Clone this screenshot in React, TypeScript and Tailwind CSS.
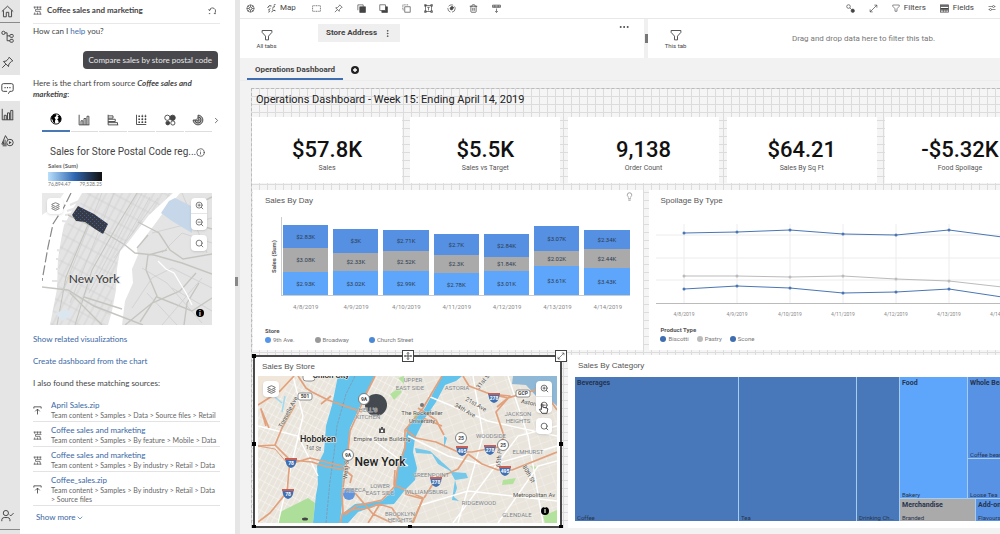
import type { ReactNode } from 'react';
import {
  ChevronDown,
  ChevronRight,
  Info,
  Layers,
  Lightbulb,
  MoreHorizontal,
  MoreVertical,
  Search,
  Trash2,
  ZoomIn,
  ZoomOut,
} from 'lucide-react';

interface IconProps {
  className?: string;
}

function Svg({ className = 'w-[10px] h-[10px]', children }: IconProps & { children: ReactNode }) {
  return (
    <svg viewBox="0 0 16 16" className={className} fill="none" stroke="currentColor" strokeWidth="1.2" aria-hidden="true">
      {children}
    </svg>
  );
}

const HomeIcon = (p: IconProps) => (
  <Svg {...p}>
    <path d="M1 8L8 1.5L15 8M3 6.5V14.5H6.5V9H9.5V14.5H13V6.5" />
  </Svg>
);

const TreeIcon = (p: IconProps) => (
  <Svg {...p}>
    <circle cx="3" cy="3.5" r="2" />
    <rect x="11" y="5.5" width="4" height="3.5" rx="1" />
    <rect x="11" y="11.5" width="4" height="3.5" rx="1" />
    <path d="M5 3.5H7.5V13.2H11M7.5 7.2H11" />
  </Svg>
);

const PinIcon = (p: IconProps) => (
  <Svg {...p}>
    <path d="M10 1.5L14.5 6L13 6.5L9.8 9.7L9.2 13L3 6.8L6.3 6.2L9.5 3ZM6 10L1.5 14.5" />
  </Svg>
);

const ChatIcon = (p: IconProps) => (
  <Svg {...p}>
    <path d="M9 14.5L10.8 11.5H13A2 2 0 0 0 15 9.5V4A2 2 0 0 0 13 2H3A2 2 0 0 0 1 4V9.5A2 2 0 0 0 3 11.5H7.5" />
    <path d="M4.3 6.8H5.7M7.3 6.8H8.7M10.3 6.8H11.7" strokeWidth="1.6" />
  </Svg>
);

const ColumnsIcon = (p: IconProps) => (
  <Svg {...p}>
    <path d="M1.5 1V14.5H15M4 14.5V9H6.500V14.5M8 14.5V6H10.5V14.5M12 14.5V3H14.5V14.5" />
  </Svg>
);

const ShapesIcon = (p: IconProps) => (
  <Svg {...p}>
    <path d="M7 12.5H1L5.5 2L8.5 7M3 12.5V9M5 12.5V7M2 14.5H7" />
    <circle cx="11" cy="10.5" r="4" />
    <path d="M9.8 8.5V12.5L13 10.5Z" fill="currentColor" stroke="none" />
  </Svg>
);

const UserIcon = (p: IconProps) => (
  <Svg {...p}>
    <circle cx="6" cy="5" r="3.2" />
    <path d="M1 15V13A3 3 0 0 1 4 10.5H8A3 3 0 0 1 11 13V15M10.5 7L12 8.5L15.5 5" />
  </Svg>
);

const SourceIcon = (p: IconProps) => (
  <Svg {...p}>
    <path d="M1 2H15M3 1V5M8 1V5M13 1V5M15 6H4.500V9.500H12.500V12M1 14.500H15M3 11.500V15M8 11.500V15M13 11.500V15" />
  </Svg>
);

const UploadIcon = (p: IconProps) => (
  <Svg {...p}>
    <path d="M1.5 4.500V1.500H14.5V4.500M8 15V5.5M4 9.5L8 5.5L12 9.5" strokeWidth="1.5" />
  </Svg>
);

const ResetIcon = (p: IconProps) => (
  <Svg {...p}>
    <path d="M4 13.5H1.500M2.500 8L0.500 6M2.500 8L5 6M2.500 8A5.500 5.500 0 1 1 11 13.5H14" strokeWidth="1.4" />
  </Svg>
);

const FunnelIcon = (p: IconProps) => (
  <Svg {...p}>
    <path d="M1.5 2H14.5V4.5L10 9.5V14.5H6V9.5L1.5 4.5Z" />
  </Svg>
);

const GlobeIcon = (p: IconProps) => (
  <Svg {...p}>
    <circle cx="8" cy="8" r="6.8" />
    <path
      d="M2 5L5 1.8L8 1.5L8.5 4L6 6L7.5 8.5L6.5 10.5L7 14L4 12L3.5 9L1.5 8ZM10 4L13 3L15 7L14 11L11.5 13L11 10L9.5 8.5L11.5 6.5Z"
      fill="currentColor"
      stroke="none"
    />
  </Svg>
);

const BarsIcon = (p: IconProps) => (
  <Svg {...p}>
    <path d="M1.5 1V14.5H15M1.5 2.5H8V5.5H1.5M1.5 7H11V10H1.5M1.5 11.5H14V14.5" />
  </Svg>
);

const DotGridIcon = (p: IconProps) => (
  <Svg {...p}>
    <path d="M2 1V14H15" />
    <path d="M4.500 3H15M4.500 7H15M4.500 11H15" strokeWidth="2.200" strokeDasharray="2.200 2" />
    <path d="M9.800 1V13M14 1V13" strokeDasharray="1 1" />
  </Svg>
);

const BubblesIcon = (p: IconProps) => (
  <Svg {...p}>
    <circle cx="4.5" cy="5" r="3.5" />
    <circle cx="11.5" cy="5" r="3.5" fill="currentColor" />
    <circle cx="11.8" cy="12" r="2.8" />
    <circle cx="5" cy="12" r="2.5" fill="currentColor" />
  </Svg>
);

const RadialIcon = (p: IconProps) => (
  <Svg {...p}>
    <path d="M8 1.500A6.500 6.500 0 1 1 1.500 8H6.500A1.500 1.500 0 1 0 8 6.500ZM8 4A4 4 0 1 1 4 8" fill="#bbb" />
  </Svg>
);

const WheelIcon = (p: IconProps) => (
  <Svg {...p}>
    <circle cx="8" cy="8" r="6.5" />
    <circle cx="8" cy="8" r="2.5" />
    <path d="M8 1.5V5.5M8 10.5V14.5M1.5 8H5.5M10.5 8H14.5M3.5 3.5L6 6M10 10L12.5 12.5M12.5 3.5L10 6M6 10L3.5 12.5" />
  </Svg>
);

const MapToolIcon = (p: IconProps) => (
  <Svg {...p}>
    <path d="M1 7L4 3L8 3.5M12 2L15 1M10 6L14 4.5M2 11L6 8M3 15L5 11.5M8 14L12 11L15 12M9 9.5L11 8" strokeWidth="1.7" />
  </Svg>
);

const RectIcon = (p: IconProps) => (
  <Svg {...p}>
    <rect x="1" y="3" width="14" height="10" strokeDasharray="2 1" />
  </Svg>
);

const FrontIcon = (p: IconProps) => (
  <Svg {...p}>
    <path d="M1.5 11V1.5H11V5" />
    <rect x="5" y="5" width="10" height="10" fill="currentColor" />
  </Svg>
);

const BackIcon = (p: IconProps) => (
  <Svg {...p}>
    <path d="M12 5H15V15H5V12H12Z" fill="currentColor" />
    <rect x="1.5" y="1.5" width="10" height="10" />
  </Svg>
);

const DuplicateIcon = (p: IconProps) => (
  <Svg {...p}>
    <path d="M3 10.500H1.500V1.500H10.500V3" strokeDasharray="2 1" />
    <rect x="5" y="5" width="9.500" height="9.500" />
  </Svg>
);

const TextBoxIcon = (p: IconProps) => (
  <Svg {...p}>
    <rect x="2.5" y="2.5" width="11" height="11" />
    <path d="M1 1H4V4H1ZM12 1H15V4H12ZM1 12H4V15H1ZM12 12H15V15H12ZM5.5 5.8H10.5M8 5.8V11.5" />
  </Svg>
);

const SpinIcon = (p: IconProps) => (
  <Svg {...p}>
    <circle cx="8" cy="8" r="6.5" strokeDasharray="9 3" />
    <circle cx="8" cy="8" r="2.5" fill="currentColor" />
    <path d="M8 4L12 7" strokeWidth="2" />
  </Svg>
);

const AlignIcon = (p: IconProps) => (
  <Svg {...p}>
    <path d="M1 2H15V6H1ZM1 4H15M5 2V6M11 2V6M8 8V15M5.5 12.5L8 15L10.5 12.5" />
  </Svg>
);

const LinkDotsIcon = (p: IconProps) => (
  <Svg {...p}>
    <circle cx="4.5" cy="4.5" r="3.2" />
    <circle cx="12" cy="12" r="3" fill="currentColor" />
    <path d="M7 7L10 10" />
  </Svg>
);

const ExpandIcon = (p: IconProps) => (
  <Svg {...p}>
    <path d="M2 14L14 2M9.5 2H14V6.5M2 9.5V14H6.5" />
  </Svg>
);

const FieldsIcon = (p: IconProps) => (
  <Svg {...p}>
    <rect x="1" y="1.5" width="14" height="13" />
    <path d="M1 3.500H15M1 8.500H15" strokeWidth="3" />
    <path d="M1 12H15M6 10V14M10.5 10V14" />
  </Svg>
);

const SlidersIcon = (p: IconProps) => (
  <Svg {...p}>
    <path d="M1 5H9M13 5H15M1 11H3M7 11H15" />
    <circle cx="11" cy="5" r="2" />
    <circle cx="5" cy="11" r="2" />
  </Svg>
);

const MoveIcon = (p: IconProps) => (
  <Svg {...p}>
    <path d="M8 1V15M1 8H15M6 3L8 1L10 3M6 13L8 15L10 13M3 6L1 8L3 10M13 6L15 8L13 10" strokeWidth="1.8" />
  </Svg>
);

const railItems = [
  { label: 'Navigate', icon: TreeIcon },
  { label: 'Pinned', icon: PinIcon },
  { label: 'Assistant', icon: ChatIcon, active: true },
  { label: 'Visualizations', icon: ColumnsIcon },
  { label: 'Widgets', icon: ShapesIcon },
];

function Rail() {
  return (
    <nav className="w-5 shrink-0 bg-[#e5e5e5] text-[#444] flex flex-col">
      <button aria-label="Home" className="h-[23px] border-b border-[#8a8a8a] flex items-center pl-px">
        <HomeIcon className="w-[13px] h-[13px]" />
      </button>
      {railItems.map(({ label, icon: Icon, active }) => (
        <button
          key={label}
          aria-label={label}
          className={`h-[26px] flex items-center pl-px ${active ? 'bg-white' : ''}`}
        >
          <Icon className="w-[13px] h-[13px]" />
        </button>
      ))}
      <button aria-label="Account" className="mt-auto mb-1 h-7 border-b border-[#8a8a8a] flex items-center pl-px">
        <UserIcon className="w-[13px] h-[13px]" />
      </button>
    </nav>
  );
}

const chartTabs = [
  { label: 'Map', icon: GlobeIcon },
  { label: 'Column', icon: ColumnsIcon },
  { label: 'Bar', icon: BarsIcon },
  { label: 'Matrix', icon: DotGridIcon },
  { label: 'Bubble', icon: BubblesIcon },
  { label: 'Radial', icon: RadialIcon },
];

const sources = [
  { name: 'April Sales.zip', path: 'Team content > Samples > Data > Source files > Retail', icon: UploadIcon },
  { name: 'Coffee sales and marketing', path: 'Team content > Samples > By feature > Mobile > Data', icon: SourceIcon },
  { name: 'Coffee sales and marketing', path: 'Team content > Samples > By industry > Retail > Data', icon: SourceIcon },
  { name: 'Coffee_sales.zip', path: 'Team content > Samples > By industry > Retail > Data > Source files', icon: UploadIcon },
];

function MapControls() {
  return (
    <>
      <button aria-label="Layers" className="absolute left-[5px] top-[5px] w-4 h-4 bg-white rounded-sm shadow flex items-center justify-center">
        <Layers className="w-[9px] h-[9px]" />
      </button>
      <div className="absolute right-[5px] top-[5px] flex flex-col gap-[5px]">
        <div className="bg-white rounded-sm shadow flex flex-col">
          <button aria-label="Zoom in" className="w-4 h-4 flex items-center justify-center border-b border-[#e5e5e5]">
            <ZoomIn className="w-[9px] h-[9px]" />
          </button>
          <button aria-label="Zoom out" className="w-4 h-4 flex items-center justify-center">
            <ZoomOut className="w-[9px] h-[9px]" />
          </button>
        </div>
        <button aria-label="Search map" className="w-4 h-4 bg-white rounded-sm shadow flex items-center justify-center">
          <Search className="w-[9px] h-[9px]" />
        </button>
      </div>
      <button aria-label="Map information" className="absolute right-2 bottom-2 w-2 h-2 rounded-full bg-black text-white text-[7px] leading-[8px] font-bold text-center">
        i
      </button>
    </>
  );
}

function PostalMap() {
  return (
    <div className="relative ml-[9px] mr-2 mt-[5px] h-[132px] text-[#555]">
      <svg viewBox="0 0 170 132" preserveAspectRatio="xMidYMid slice" className="w-full h-full" role="img" aria-label="Map of New York">
        <defs>
          <pattern id="avenues" width="7" height="12" patternUnits="userSpaceOnUse" patternTransform="rotate(28)">
            <path d="M1 0V12M0 3H7" stroke="#cfcfcf" strokeWidth="0.8" fill="none" />
          </pattern>
          <pattern id="shade" width="4" height="4" patternUnits="userSpaceOnUse">
            <rect width="4" height="4" fill="#3a3b42" />
            <rect width="1" height="1" fill="#2f5fb0" />
            <rect x="2" y="2" width="1" height="1" fill="#2f5fb0" />
          </pattern>
        </defs>
        <rect width="170" height="132" fill="#e4e4e4" />
        <path d="M45 0H130L108 22L82 50L76 58L72 100L67 125L65 132H0V50L20 40Z" fill="url(#avenues)" />
        <path d="M0 0H40L31 16L22 32L19 47L16 66L15 96L8 132H0Z" fill="#fff" />
        <path d="M0 0H22L12 14L0 22Z" fill="#e9e9e9" />
        <path d="M131 0H138L120 22L103 44L95 56L96 62L90 76L91 90L83 108L80 132H66L70 118L74 97L75 76L78 58L84 52L107 22Z" fill="#fff" />
        <path d="M118 24L127 12L130 14L109 37Z" fill="#e4e4e4" />
        <path d="M29 0L22 14L11 31L6 54L0 88" stroke="#888" strokeWidth="1.2" strokeDasharray="10 3" fill="none" />
        <path d="M28 12L37 8M25 18L34 15M23 22L31 21M20 28L28 29M15 57L19 58M14 66L18 66M14 76L17 76M10 88L16 88" stroke="#e4e4e4" strokeWidth="2" />
        <g fill="none" stroke="#c5c5c0" strokeWidth="1.4">
          <path d="M0 94L26 97L52 113L101 132M28 100L60 132M42 104L80 116" />
          <path d="M26 22L60 38L83 52L93 60L112 62L140 70L170 81" />
          <path d="M96 29L117 40L128 57L141 66L170 61M106 42L95 55M125 57L106 62L104 77L115 103L98 129M154 80L138 98L110 110L83 132" />
          <path d="M131 19L152 13L170 4M129 14L147 29L170 36M142 132L145 110L157 90M115 104L150 118L170 105" />
          <path d="M33 132L50 77L75 33L95 0M15 132L24 84L50 22" strokeWidth="1.1" />
        </g>
        <g fill="none" stroke="#cbcbcb" strokeWidth="0.7">
          <path d="M90 115L110 85L130 75L170 95M100 75L125 90L160 130M120 60L140 40L170 50M140 0L165 60M110 40L170 25M130 95L170 118M105 100L135 132M120 132L160 85" />
          <path d="M100 0L47 100M108 4L60 90M116 5L72 65M60 0L20 100M72 0L28 110" />
        </g>
        <path d="M116 68L124 76L132 80L144 100L150 112" stroke="#fff" strokeWidth="1.3" fill="none" />
        <path d="M119 20L127 8L133 5L149 13L150 40L140 34L130 28Z" fill="#c5d7e9" />
        <path d="M13 120L25 116L31 122L20 128Z" fill="#dce6ee" />
        <path d="M36 13L46 18L52 21L66 31L61 41L53 36L43 29L34 28L30 22Z" fill="url(#shade)" />
        <text x="52" y="90" textAnchor="middle" fontSize="12" fontWeight="500" fill="#444" stroke="#e9e9e9" strokeWidth="1.5" paintOrder="stroke">
          New York
        </text>
      </svg>
      <MapControls />
    </div>
  );
}

function AssistantPanel() {
  return (
    <aside className="w-[215px] shrink-0 bg-white pl-[13px] pr-[15px] font-[Lato,'Liberation_Sans',sans-serif] text-[8px] leading-[11px] text-[#444]">
      <header className="h-6 border-b border-[#e8e8e8] flex items-center gap-[5px] pb-[3px]">
        <SourceIcon className="w-[9px] h-[9px]" />
        <h1 className="font-bold flex-1">Coffee sales and marketing</h1>
        <button aria-label="Start over" className="mr-[3px]">
          <ResetIcon className="w-[9px] h-[9px]" />
        </button>
      </header>
      <p className="mt-[2px]">
        How can I <a href="#help" className="text-[#3f6fb0]">help</a> you?
      </p>
      <div className="mt-[14px] flex justify-end pr-[2px]">
        <p className="h-[18px] px-[6px] rounded-[4px] bg-[#47474c] text-[#e8e8e8] flex items-center">
          Compare sales by store postal code
        </p>
      </div>
      <p className="mt-[9px]">
        Here is the chart from source <b><i>Coffee sales and marketing</i></b>:
      </p>

      <div className="mt-2 ml-[9px] flex items-center">
        <div className="flex-1 flex gap-px">
          {chartTabs.map(({ label, icon: Icon }, i) => (
            <button
              key={label}
              aria-label={label}
              className={`flex-1 h-6 flex items-center justify-center ${
                i === 0 ? 'border-[#4a78b5] border-b-2 text-black' : 'border-b border-[#ddd]'
              }`}
            >
              <Icon className="w-3 h-3" />
            </button>
          ))}
        </div>
        <button aria-label="More chart types" className="w-2">
          <ChevronRight className="w-[9px] h-[9px]" />
        </button>
      </div>

      <h2 className="mt-[13px] ml-[17px] font-[Roboto,sans-serif] text-[10px] leading-[14px] flex items-center whitespace-nowrap">
        Sales for Store Postal Code reg... <Info className="w-[9px] h-[9px]" />
      </h2>
      <div className="ml-[15px] mt-[3px] text-[6px] leading-[8px]">
        <p className="font-bold text-[#666]">Sales (Sum)</p>
        <div className="mt-[2px] w-[54px] h-[9px] bg-linear-to-r from-[#b9e0fb] via-[#2f66b0] to-[#111]" />
        <div className="w-[54px] h-[7px] flex justify-between text-[5px] leading-[7px] text-[#777]">
          <span>76,894.47</span>
          <span>79,528.25</span>
        </div>
      </div>
      <PostalMap />

      <a href="#related" className="block mt-[9px] text-[#3a67a5]">Show related visualizations</a>
      <a href="#create" className="block mt-[11px] text-[#3a67a5]">Create dashboard from the chart</a>
      <p className="mt-[11px] mb-2">I also found these matching sources:</p>
      <ul>
        {sources.map(({ name, path, icon: Icon }, i) => (
          <li key={i} className="pt-[3px] pb-px border-b border-[#e3e3e3] flex items-center">
            <Icon className="w-[9px] h-[9px] shrink-0" />
            <div className="ml-[9px]">
              <a href="#source" className="block text-[#3a67a5]">{name}</a>
              <p className="text-[7px] leading-[9px] text-[#666]">{path}</p>
            </div>
          </li>
        ))}
      </ul>
      <button className="mt-[6px] ml-[3px] text-[#3a67a5] flex items-center gap-px">
        Show more <ChevronDown className="w-2 h-2" />
      </button>
    </aside>
  );
}

const editTools = [
  { label: 'Select', icon: RectIcon },
  { label: 'Pin', icon: PinIcon },
  { label: 'Bring to front', icon: FrontIcon },
  { label: 'Send to back', icon: BackIcon },
  { label: 'Duplicate', icon: DuplicateIcon },
  { label: 'Text', icon: TextBoxIcon },
  { label: 'Interactions', icon: SpinIcon },
  { label: 'Delete', icon: Trash2 },
  { label: 'Align', icon: AlignIcon },
];

function Toolbar() {
  return (
    <div className="h-[19px] pb-[2px] bg-white border-b border-[#e8e8e8] text-[8px] text-[#444] flex items-center pl-[6px] pr-1">
      <button aria-label="Settings"><WheelIcon className="w-[9px] h-[9px]" /></button>
      <button className="ml-3 flex items-center gap-1"><MapToolIcon className="w-[9px] h-[9px]" /> Map</button>
      <div className="ml-4 w-[189px] flex justify-between">
        {editTools.map(({ label, icon: Icon }) => (
          <button key={label} aria-label={label}><Icon className="w-[9px] h-[9px]" /></button>
        ))}
      </div>
      <div className="ml-auto flex items-center gap-[14px]">
        <button aria-label="Relationships"><LinkDotsIcon className="w-[9px] h-[9px]" /></button>
        <button aria-label="Full screen"><ExpandIcon className="w-[9px] h-[9px]" /></button>
        <button className="flex items-center gap-1"><FunnelIcon className="w-2 h-2" /> Filters</button>
        <button className="flex items-center gap-1"><FieldsIcon className="w-[9px] h-[9px]" /> Fields</button>
        <button aria-label="Properties"><SlidersIcon className="w-2 h-2" /></button>
      </div>
    </div>
  );
}

function FilterBar() {
  return (
    <div className="grid grid-cols-[404fr_4px_352fr] h-[39px] text-[#444]">
      <div className="bg-white flex">
        <div className="w-[53px] pt-[10px] flex flex-col items-center text-[6px] leading-[9px]">
          <FunnelIcon className="w-3 h-3" />
          All tabs
        </div>
        <div className="ml-[25px] mt-[5px] h-[18px] w-[82px] bg-[#efefef] flex items-center justify-between pl-2 pr-2 text-[8px] font-bold">
          Store Address
          <button aria-label="Filter options"><MoreVertical className="w-[9px] h-[9px]" /></button>
        </div>
        <button aria-label="More filters" className="ml-auto mr-[14px] mt-[2px] self-start">
          <MoreHorizontal className="w-3 h-3" />
        </button>
      </div>
      <div className="bg-[#f0f0f0] flex items-center justify-center">
        <div className="w-[3px] h-[9px] bg-[#777]" />
      </div>
      <div className="bg-white flex">
        <div className="w-[55px] pt-[10px] flex flex-col items-center text-[6px] leading-[9px]">
          <FunnelIcon className="w-3 h-3" />
          This tab
        </div>
        <p className="flex-1 pl-6 flex items-center justify-center text-[8px] text-[#777]">
          Drag and drop data here to filter this tab.
        </p>
      </div>
    </div>
  );
}

const kpis = [
  { value: '$57.8K', label: 'Sales' },
  { value: '$5.5K', label: 'Sales vs Target' },
  { value: '9,138', label: 'Order Count' },
  { value: '$64.21', label: 'Sales By Sq Ft' },
  { value: '-$5.32K', label: 'Food Spoilage' },
];

function KpiRow() {
  return (
    <div className="flex gap-2">
      {kpis.map((kpi) => (
        <div key={kpi.label} className="flex-1 h-[66px] bg-white flex flex-col items-center pt-[20px]">
          <strong className="text-[22px] leading-[26px] font-medium text-[#111]">{kpi.value}</strong>
          <span className="text-[7px] leading-[11px] text-[#555]">{kpi.label}</span>
        </div>
      ))}
    </div>
  );
}

// thousands of dollars, one column per day
const salesByDay = [
  { day: '4/8/2019', church: 2.83, broadway: 3.08, ninth: 2.93 },
  { day: '4/9/2019', church: 3, broadway: 2.33, ninth: 3.02 },
  { day: '4/10/2019', church: 2.71, broadway: 2.52, ninth: 2.99 },
  { day: '4/11/2019', church: 2.7, broadway: 2.3, ninth: 2.78 },
  { day: '4/12/2019', church: 2.84, broadway: 1.84, ninth: 3.01 },
  { day: '4/13/2019', church: 3.07, broadway: 2.02, ninth: 3.61 },
  { day: '4/14/2019', church: 2.34, broadway: 2.44, ninth: 3.43 },
];

const PX_PER_K = 7.9;

function Segment({ value, className }: { value: number; className: string }) {
  return (
    <div
      className={`flex items-center justify-center text-[6px] text-[#2d3b50] ${className}`}
      style={{ height: value * PX_PER_K }}
    >
      ${value}K
    </div>
  );
}

function PanelTitle({ children }: { children: ReactNode }) {
  return <h3 className="font-['Liberation_Sans',sans-serif] text-[8px] leading-[10px] text-[#555]">{children}</h3>;
}

function Legend({ title, items, gap }: { title: string; items: { name: string; dot: string }[]; gap: string }) {
  return (
    <div className="text-[6px] leading-[9px] text-[#777]">
      <p className="font-bold text-[#555]">{title}</p>
      <ul className={`flex ${gap}`}>
        {items.map((item) => (
          <li key={item.name} className="flex items-center gap-[2px]">
            <span className={`w-[6px] h-[6px] rounded-full ${item.dot}`} />
            {item.name}
          </li>
        ))}
      </ul>
    </div>
  );
}

function SalesByDay() {
  return (
    <section className="h-[160px] bg-white pt-[6px] pl-3 pr-[13px]">
      <div className="flex justify-between items-start">
        <PanelTitle>Sales By Day</PanelTitle>
        <button aria-label="Insights" className="text-[#888] -mt-1 -mr-1"><Lightbulb className="w-[9px] h-[9px]" /></button>
      </div>
      <div className="mt-[11px] flex">
        <div className="w-4 flex items-center justify-center">
          <span className="-rotate-90 whitespace-nowrap text-[6px] font-bold text-[#555]">Sales (Sum)</span>
        </div>
        <div className="flex-1 h-[79px] border-l border-b border-[#ccc] flex items-end gap-[5px] px-px">
          {salesByDay.map((d) => (
            <div key={d.day} className="flex-1">
              <Segment value={d.church} className="bg-[#5590e2]" />
              <Segment value={d.broadway} className="bg-[#aaa]" />
              <Segment value={d.ninth} className="bg-[#5ea6fb]" />
            </div>
          ))}
        </div>
      </div>
      <div className="mt-[6px] ml-[18px] flex gap-[5px] text-[6px] leading-[9px] text-[#888]">
        {salesByDay.map((d) => (
          <span key={d.day} className="flex-1 text-center">{d.day}</span>
        ))}
      </div>
      <div className="mt-[15px]">
        <Legend
          title="Store"
          gap="gap-5"
          items={[
            { name: '9th Ave.', dot: 'bg-[#5596ea]' },
            { name: 'Broadway', dot: 'bg-[#999]' },
            { name: 'Church Street', dot: 'bg-[#4a88d8]' },
          ]}
        />
      </div>
    </section>
  );
}

const spoilageDays = ['4/8/2019', '4/9/2019', '4/10/2019', '4/11/2019', '4/12/2019', '4/13/2019', '4/14/2019'];

const spoilageLines = [
  { name: 'Biscotti', color: '#4a76b4', points: [22, 21, 19, 23, 24, 19, 26] },
  { name: 'Pastry', color: '#bbbbbb', points: [65, 65, 66, 65, 68, 70, 76] },
  { name: 'Scone', color: '#4a76b4', points: [78, 75, 77, 82, 81, 78, 86] },
];

const dayX = (i: number) => 28 + i * 53;

function SpoilageByType() {
  return (
    <section className="h-[160px] bg-white pt-[6px] pl-[11px] overflow-hidden">
      <PanelTitle>Spoilage By Type</PanelTitle>
      <svg viewBox="0 0 376 112" className="-ml-1 mt-[5px] w-[376px] h-[112px]" role="img" aria-label="Spoilage by product type">
        <path d="M0 24H376M0 47H376M0 69H376" stroke="#ececec" />
        <path d="M0 92.500H376" stroke="#bbb" />
        {spoilageDays.map((day, i) => (
          <g key={day}>
            <path d={`M${dayX(i)} 13V92`} stroke="#ececec" />
            <text x={dayX(i)} y="105" textAnchor="middle" fontSize="5" fill="#888">{day}</text>
          </g>
        ))}
        {spoilageLines.map((line) => (
          <g key={line.name}>
            <polyline
              points={line.points.map((y, i) => `${dayX(i)},${y}`).join(' ')}
              fill="none"
              stroke={line.color}
            />
            {line.points.map((y, i) => (
              <circle key={i} cx={dayX(i)} cy={y} r="1.500" fill={line.color} />
            ))}
          </g>
        ))}
      </svg>
      <div className="mt-[2px]">
        <Legend
          title="Product Type"
          gap="gap-2"
          items={[
            { name: 'Biscotti', dot: 'bg-[#3e6db0]' },
            { name: 'Pastry', dot: 'bg-[#bbb]' },
            { name: 'Scone', dot: 'bg-[#3e6db0]' },
          ]}
        />
      </div>
    </section>
  );
}

const shields = [
  { x: 33, y: 87, n: '78' },
  { x: 30, y: 118, n: '78' },
  { x: 236, y: 22, n: '278' },
  { x: 204, y: 75, n: '495' },
  { x: 232, y: 74, n: '278' },
  { x: 247, y: 95, n: '495' },
  { x: 178, y: 106, n: '278' },
];

const roundSigns = [
  { x: 106, y: 23, n: '9A' },
  { x: 90, y: 79, n: '9A' },
  { x: 203, y: 62, n: '25' },
  { x: 245, y: 69, n: '25' },
];

const districts = [
  { x: 155, y: 6, name: 'UPPER' },
  { x: 152, y: 14, name: 'EAST SIDE' },
  { x: 199, y: 14, name: 'ASTORIA' },
  { x: 110, y: 36, name: "HELL'S" },
  { x: 110, y: 43, name: 'KITCHEN' },
  { x: 260, y: 40, name: 'JACKSON' },
  { x: 260, y: 47, name: 'HEIGHTS' },
  { x: 233, y: 62, name: 'WOODSIDE' },
  { x: 270, y: 78, name: 'ELMHURST' },
  { x: 173, y: 101, name: 'GREENPOINT' },
  { x: 168, y: 118, name: 'WILLIAMSBURG' },
  { x: 221, y: 129, name: 'RIDGEWOOD' },
  { x: 259, y: 141, name: 'GLENDALE' },
  { x: 96, y: 116, name: 'TRIBECA' },
  { x: 122, y: 112, name: 'LOWER' },
  { x: 122, y: 119, name: 'EAST SIDE' },
  { x: 142, y: 140, name: 'BROOKLYN' },
  { x: 142, y: 146, name: 'HEIGHTS' },
];

function StoreMap() {
  return (
    <svg viewBox="0 0 299 147" preserveAspectRatio="xMidYMid slice" className="w-full h-full" role="img" aria-label="Sales by store map">
      <defs>
        <pattern id="blocks" width="5" height="9" patternUnits="userSpaceOnUse" patternTransform="rotate(28)">
          <path d="M0 0V9M0 0H5" stroke="#fbfaf8" strokeWidth="1" fill="none" />
        </pattern>
        <pattern id="blocksQueens" width="11" height="8" patternUnits="userSpaceOnUse" patternTransform="rotate(-20)">
          <path d="M0 0V8M0 0H11" stroke="#f7f4ef" strokeWidth="0.9" fill="none" />
        </pattern>
      </defs>
      <rect width="299" height="147" fill="#e9e5dc" />
      <rect width="150" height="147" fill="url(#blocks)" />
      <rect x="150" width="149" height="147" fill="url(#blocksQueens)" />
      <path d="M19 147L22 136L50 122L57 127L55 147Z" fill="#addf9a" />
      <path d="M0 0H36L22 22L0 28Z" fill="#f1e6da" />
      <path d="M132 18L141 12L144 16L136 24ZM140 2L146 0L146 8ZM155 40L163 34L160 48ZM245 104L258 102L255 108L244 109ZM285 140L299 134V147H287ZM272 90L279 91L277 95Z" fill="#b3e29c" />
      <path d="M80 0H117L108 18L100 35L92 52L89 82L85 98L84 128L82 147H55L58 119L60 108L59 90L66 76L68 50L74 29Z" fill="#62c3ec" />
      <path d="M184 0H204L198 5L187 9L178 26L167 42L157 62L155 76L159 92L157 104L147 114L136 128L120 129L100 136L90 147H82L84 138L97 128L124 125L136 113L139 92L147 69L149 52L167 32Z" fill="#62c3ec" />
      <path d="M157 72L172 75L184 86L195 96L208 97L210 102L197 104L192 95L180 88L174 78L158 77ZM197 104L199 112L196 121L201 125L194 124ZM186 72L189 62L186 60" fill="#75c8ea" />
      <path d="M255 0H299V30L291 23L278 20L268 9L254 8Z" fill="#8fb8d6" />
      <path d="M97 0L88 18L79 50L76 78L72 105L68 147" stroke="#8791a5" strokeWidth="0.7" strokeDasharray="3 1" fill="none" />
      <path d="M8 5L12 14L18 22L24 27M27 20L24 36" stroke="#9fdaf0" strokeWidth="1.5" fill="none" />
      <g fill="none" stroke="#fff" strokeWidth="1.4">
        <path d="M150 60L190 80L230 90L299 70M195 147L230 100L260 60L299 50M160 130L210 115L299 125M215 0L225 60L200 147M170 20L230 45L299 60M240 147L280 90L299 85M250 0L270 60L285 147M0 50L40 60L60 100M35 0L45 40L20 147M110 60L150 90" />
      </g>
      <g fill="none" stroke="#e2a17c" strokeWidth="1.7" strokeLinejoin="round">
        <path d="M40 0L48 12L54 16L70 24L104 36M36 0L22 15L0 29M63 28L73 20M11 52L3 33L8 50" />
        <path d="M0 70L17 69L32 84L54 86L66 90L87 94L94 100L92 107M17 69L24 52L37 29M32 84L29 116L12 137L0 146M32 88L52 82L92 92" />
        <path d="M0 70L17 73L30 88" strokeWidth="1" />
        <path d="M117 0L108 18L100 37L92 55L89 85L84 118L85 135L82 147M87 139L98 130L124 124L137 110L140 91L147 72L147 54L165 32L184 0" />
        <path d="M97 117L115 138L134 147M84 138L92 134L111 132L121 128L134 132L144 147M110 147L122 128" />
        <path d="M137 94L136 109L165 122L155 147M160 32L178 44L186 59M165 42L184 50M148 54L158 62L178 66L200 76L214 76L235 72L246 70" />
        <path d="M205 0L211 10L232 18L250 22L284 12M232 18L252 20L238 36L246 60L241 72M250 22L239 31M284 12L299 34" />
        <path d="M210 78L224 88L240 94L254 94L299 76M210 78L200 93L178 103L166 122M147 118L165 123L154 147" />
      </g>
      <circle cx="118" cy="29" r="11" fill="#3b4048" fillOpacity="0.95" />
      <circle cx="91" cy="118" r="6" fill="#4a86dc" fillOpacity="0.85" />
      <g fontSize="6" fill="#80868c" textAnchor="middle" stroke="#f0ede6" strokeWidth="0.9" strokeOpacity="0.6" paintOrder="stroke">
        {districts.map((d) => (
          <text key={d.name + d.y} x={d.x} y={d.y}>{d.name}</text>
        ))}
      </g>
      <g fontSize="6" fill="#555" textAnchor="middle" stroke="#f4f1ea" strokeWidth="1" strokeOpacity="0.6" paintOrder="stroke">
        <text x="124" y="65">Empire State Building</text>
        <text x="164" y="39">The Rockefeller</text>
        <text x="164" y="47">University</text>
        <text x="55" y="74" transform="rotate(8 55 74)">1st St</text>
        <text x="32" y="37" transform="rotate(-62 32 37)">Tonnelle Ave</text>
        <text x="90" y="93" transform="rotate(-85 90 93)">West St</text>
        <text x="217" y="30" transform="rotate(30 217 30)">21st Ave</text>
        <text x="206" y="36" transform="rotate(30 206 36)">34th Ave</text>
        <text x="227" y="6" transform="rotate(-50 227 6)">31st St</text>
        <text x="272" y="29" transform="rotate(12 272 29)">Astoria</text>
        <text x="243" y="82" transform="rotate(-84 243 82)">65th Pl</text>
        <text x="269" y="99" transform="rotate(60 269 99)">80th St</text>
        <text x="276" y="121">Metropolitan Av</text>
      </g>
      <path d="M121 52.500H127V57H121ZM123 51H125V53H123Z" fill="#555" />
      <circle cx="124" cy="55" r="1.200" fill="#fff" />
      <circle cx="164" cy="29" r="2" fill="#777" />
      <ellipse cx="47" cy="143" rx="3" ry="1.500" fill="#444" />
      {shields.map((s) => (
        <g key={`${s.x}-${s.y}`}>
          <path d={`M${s.x - 6} ${s.y - 5}H${s.x + 6}L${s.x + 5} ${s.y}Q${s.x + 4} ${s.y + 4} ${s.x} ${s.y + 5}Q${s.x - 4} ${s.y + 4} ${s.x - 5} ${s.y}Z`} fill="#3f6fb0" />
          <path d={`M${s.x - 6} ${s.y - 4}H${s.x + 6}`} stroke="#c65f55" strokeWidth="2" />
          <text x={s.x} y={s.y + 2} textAnchor="middle" fontSize="5" fontWeight="700" fill="#fff">{s.n}</text>
        </g>
      ))}
      {roundSigns.map((s) => (
        <g key={`${s.x}-${s.y}`}>
          <circle cx={s.x} cy={s.y} r="5.500" fill="#fff" stroke="#666" strokeWidth="0.8" />
          <text x={s.x} y={s.y + 2} textAnchor="middle" fontSize="5" fontWeight="700" fill="#444">{s.n}</text>
        </g>
      ))}
      <g fill="#fff" stroke="#777" strokeWidth="0.8">
        <rect x="40" y="17" width="14" height="7" rx="2" />
        <rect x="258" y="14" width="14" height="7" rx="2" />
        <rect x="45" y="-3" width="12" height="8" rx="3" />
      </g>
      <g fontSize="5" fontWeight="700" fill="#444" textAnchor="middle">
        <text x="47" y="22">501</text>
        <text x="265" y="19">GCP</text>
      </g>
      <g fontWeight="500" fill="#222" textAnchor="middle" stroke="#f3f0ea" strokeWidth="1.2" paintOrder="stroke">
        <text x="73" y="2" fontSize="8">Union City</text>
        <text x="60" y="66" fontSize="9">Hoboken</text>
        <text x="122" y="90" fontSize="12">New York</text>
      </g>
    </svg>
  );
}

const resizeHandles = [
  'left-[-3px] top-[-3px]',
  'left-[-3px] top-1/2',
  'left-[-3px] bottom-[-3px]',
  'left-1/2 bottom-[-3px]',
  'right-[-3px] top-1/2',
  'right-[-3px] bottom-[-3px]',
];

function SalesByStore() {
  return (
    <section className="relative h-[173px] bg-white border-2 border-[#4a4a4a] pt-1 px-[3px] text-[#444]">
      <div className="pl-1 pt-px"><PanelTitle>Sales By Store</PanelTitle></div>
      <div className="relative mt-1 h-[147px]">
        <StoreMap />
        <MapControls />
        <svg viewBox="0 0 16 16" className="absolute right-[8px] top-[27px] w-[11px] h-[11px]" aria-hidden="true">
          <path
            d="M5 1.500Q6.500 0.500 7 2.500V6L13 7.500Q14.500 8 14 10L13 15H6L2 9.500Q2.500 8 5 9.500Z"
            fill="#fff"
            stroke="#333"
            strokeWidth="1.300"
          />
        </svg>
      </div>
      {resizeHandles.map((pos) => (
        <span key={pos} className={`absolute w-1 h-1 bg-black ${pos}`} />
      ))}
      <button aria-label="Move" className="absolute left-1/2 -top-[7px] -ml-[6px] w-3 h-3 bg-white border border-[#444] flex items-center justify-center">
        <MoveIcon className="w-2 h-2" />
      </button>
      <button aria-label="Expand" className="absolute -right-[7px] -top-[7px] w-3 h-3 bg-white border border-[#444] flex items-center justify-center">
        <ExpandIcon className="w-2 h-2" />
      </button>
    </section>
  );
}

function Tile({ group, label, className }: { group?: string; label: string; className: string }) {
  return (
    <div className={`flex flex-col justify-between overflow-hidden whitespace-nowrap px-[2px] pt-[2px] text-[6px] leading-[7px] text-[#26344d] ${className}`}>
      <b className="text-[7px] leading-[8px]">{group}</b>
      <span className="truncate">{label}</span>
    </div>
  );
}

function SalesByCategory() {
  return (
    <section className="h-[173px] bg-white pt-[6px] pl-[7px]">
      <div className="pl-[3px]"><PanelTitle>Sales By Category</PanelTitle></div>
      <div className="mt-[6px] h-[144px] grid grid-cols-[324fr_135fr] gap-px bg-[#a5cdf0]">
        <div className="grid grid-cols-[163fr_117fr_42fr] gap-px">
          <Tile group="Beverages" label="Coffee" className="bg-[#4878ba]" />
          <Tile label="Tea" className="bg-[#4878ba]" />
          <Tile label="Drinking Chocolate" className="bg-[#4878ba]" />
        </div>
        <div className="grid grid-rows-[121fr_22fr] gap-px">
          <div className="grid grid-cols-2 gap-px">
            <Tile group="Food" label="Bakery" className="bg-[#5ea6fb]" />
            <div className="grid grid-rows-[81fr_39fr] gap-px">
              <Tile group="Whole Beans" label="Coffee beans" className="bg-[#5892e4]" />
              <Tile label="Loose Tea" className="bg-[#5892e4]" />
            </div>
          </div>
          <div className="grid grid-cols-[75fr_59fr] gap-px">
            <Tile group="Merchandise" label="Branded" className="bg-[#aaa]" />
            <Tile group="Add-ons" label="Flavours" className="bg-[#5892e4]" />
          </div>
        </div>
      </div>
    </section>
  );
}

// the canvas is a little wider than its viewport and is cut off on the right
function Canvas() {
  return (
    <div className="ml-[11px] mt-[7px] overflow-hidden">
      <div className="w-[calc(100%+35px)] border-t border-l border-dashed border-[#bbb] bg-[#f5f5f5] bg-[linear-gradient(#dcdcdc_1px,transparent_1px),linear-gradient(90deg,#dcdcdc_1px,transparent_1px)] bg-[size:8px_8px] bg-[position:-1px_-1px]">
        <h2 className="h-7 pl-1 pt-1 text-[11px] leading-[14px] text-[#222]">
          Operations Dashboard - Week 15: Ending April 14, 2019
        </h2>
        <KpiRow />
        <div className="mt-[7px] ml-px grid grid-cols-[391fr_386fr] gap-[6px]">
          <SalesByDay />
          <SpoilageByType />
        </div>
        <div className="mt-[5px] ml-px grid grid-cols-[309fr_467fr] gap-[6px]">
          <SalesByStore />
          <SalesByCategory />
        </div>
      </div>
    </div>
  );
}

export default function App() {
  return (
    <div className="min-h-screen flex bg-[#f2f2f2] font-[Roboto,'Liberation_Sans',sans-serif]">
      <Rail />
      <AssistantPanel />
      <div className="w-[5px] shrink-0 bg-[#e6e6e6] flex items-center">
        <div className="w-[3px] h-[9px] mt-[28px] bg-[#888]" />
      </div>
      <main className="flex-1 min-w-0">
        <Toolbar />
        <FilterBar />
        <div className="h-[23px] pl-[7px] flex items-start border-b border-[#ececec]">
          <button className="h-[22px] px-2 pt-[3px] border-b-2 border-[#3e6db0] text-[8px] font-bold text-[#444]">
            Operations Dashboard
          </button>
          <button aria-label="Add tab" className="ml-2 mt-2 w-2 h-2 rounded-full bg-[#222] text-white">
            <svg viewBox="0 0 8 8" className="w-2 h-2" aria-hidden="true">
              <path d="M4 2V6M2 4H6" stroke="currentColor" strokeWidth="1.4" />
            </svg>
          </button>
        </div>
        <Canvas />
      </main>
    </div>
  );
}
